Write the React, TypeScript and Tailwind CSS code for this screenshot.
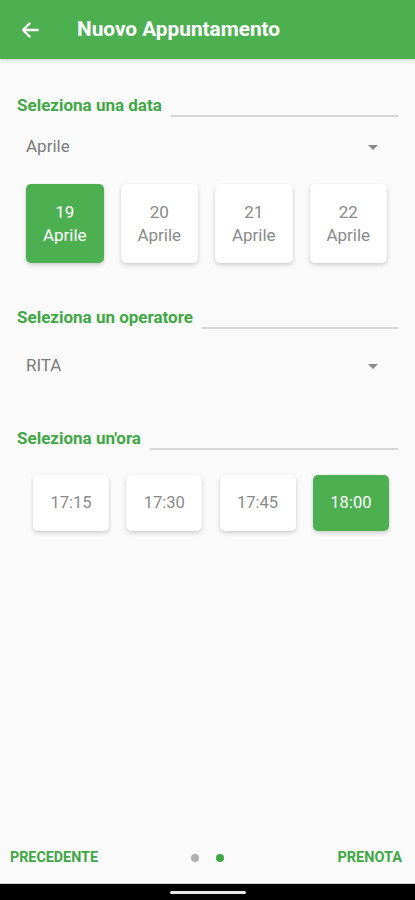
import React from "react";

const font = { fontFamily: "Roboto, 'Noto Sans', sans-serif" };

function SectionLabel({ text }: { text: string }) {
  return (
    <div className="flex items-end pl-[17px] pr-[17px] h-[22px]">
      <span className="text-[17px] font-bold text-[#3FA845] leading-[22px] whitespace-nowrap">{text}</span>
      <div className="flex-1 ml-[9px] -mb-[1px] h-[2px] bg-[#D6D6D6]" />
    </div>
  );
}

function Dropdown({ value }: { value: string }) {
  return (
    <div className="flex items-center justify-between pl-[26px] pr-[37px] h-[30px]">
      <span className="text-[17px] text-[#7A7A7A]">{value}</span>
      <svg width="10" height="5" viewBox="0 0 10 5">
        <path d="M0 0 L10 0 L5 5 Z" fill="#8A8A8A" />
      </svg>
    </div>
  );
}

export default function App() {
  const dates = ["19", "20", "21", "22"];
  const times = ["17:15", "17:30", "17:45", "18:00"];
  return (
    <div className="w-[415px] h-[900px] bg-[#FAFAFA] flex flex-col" style={font}>
      <div className="h-[59px] bg-[#4CAF50] flex items-center shrink-0 shadow-[0_1px_3px_rgba(0,0,0,0.2)]">
        <svg className="ml-[21px]" width="18" height="16" viewBox="0 0 18 16">
          <path d="M17 8 H2 M8.5 1.5 L2 8 L8.5 14.5" stroke="white" strokeWidth="2.4" fill="none" strokeLinecap="round" strokeLinejoin="round" />
        </svg>
        <span className="ml-[38px] text-white text-[20.8px] font-bold">Nuovo Appuntamento</span>
      </div>

      <div className="flex-1 flex flex-col">
        <div className="mt-[35px]">
          <SectionLabel text="Seleziona una data" />
        </div>
        <div className="mt-[16px]">
          <Dropdown value="Aprile" />
        </div>
        <div className="mt-[22px] flex pl-[26px] gap-[17px]">
          {dates.map((d, i) => (
            <div
              key={d}
              className={`w-[77.5px] h-[79px] rounded-[5px] flex flex-col items-center justify-center text-[17px] leading-[23px] shadow-[0_2px_4px_rgba(0,0,0,0.18)] ${
                i === 0 ? "bg-[#4CAF50] text-white" : "bg-white text-[#8A8A8A]"
              }`}
            >
              <span>{d}</span>
              <span>Aprile</span>
            </div>
          ))}
        </div>

        <div className="mt-[43px]">
          <SectionLabel text="Seleziona un operatore" />
        </div>
        <div className="mt-[23px]">
          <Dropdown value="RITA" />
        </div>

        <div className="mt-[46px]">
          <SectionLabel text="Seleziona un'ora" />
        </div>
        <div className="mt-[26px] flex pl-[33px] gap-[17.3px]">
          {times.map((t, i) => (
            <div
              key={t}
              className={`w-[76px] h-[56px] rounded-[5px] flex items-center justify-center text-[16.5px] shadow-[0_2px_4px_rgba(0,0,0,0.18)] ${
                i === 3 ? "bg-[#4CAF50] text-white" : "bg-white text-[#8A8A8A]"
              }`}
            >
              {t}
            </div>
          ))}
        </div>
      </div>

      <div className="h-[50px] flex items-center justify-between px-[10px] shrink-0 relative">
        <span className="text-[14.3px] font-bold text-[#3FA845]">PRECEDENTE</span>
        <div className="absolute left-[191px] top-[21px] flex gap-[17px]">
          <div className="w-[8px] h-[8px] rounded-full bg-[#B0B0B0]" />
          <div className="w-[8px] h-[8px] rounded-full bg-[#3FA845]" />
        </div>
        <span className="text-[14.5px] font-bold text-[#3FA845] mr-[3px]">PRENOTA</span>
      </div>
      <div className="h-[17px] bg-black flex items-center justify-center shrink-0 border-t border-[#CFCFCF]">
        <div className="w-[76px] h-[3px] rounded-full bg-[#E8E8E8]" />
      </div>
    </div>
  );
}
